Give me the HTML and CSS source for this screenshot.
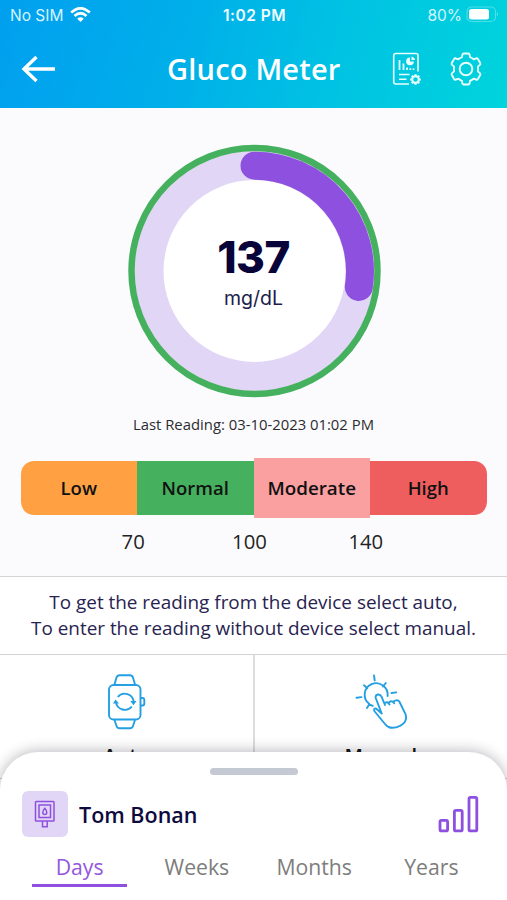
FILE: index.html
```html
<!DOCTYPE html>
<html lang="en">
<head>
<meta charset="utf-8">
<title>Gluco Meter</title>
<link rel="stylesheet" href="styles.css">
</head>
<body>
<div class="screen">
  <header class="header">
    <div class="status">
      <div class="carrier"><span>No SIM</span>
        <svg width="21" height="16" viewBox="0 0 21 16"><g fill="none" stroke="#fff" stroke-width="2.7"><path d="M1.2 5.6Q10.500-2.800 19.800 5.600"/><path d="M4.500 9Q10.500 3.500 16.500 9"/></g><path d="M7.200 11.700Q10.500 9 13.800 11.700L10.500 15Z" fill="#fff"/></svg>
      </div>
      <div class="time">1:02 PM</div>
      <div class="battery"><span>80%</span>
        <svg width="33" height="17" viewBox="0 0 33 17"><rect x="1" y="1" width="28.500" height="14.500" rx="4.500" fill="none" stroke="#fff" stroke-opacity=".3" stroke-width="1.200"/><rect x="3" y="3" width="20" height="10.500" rx="2.500" fill="#fff"/><path d="M31 6Q33 8.200 31 10.500Z" fill="#fff" opacity=".4"/></svg>
      </div>
    </div>
    <div class="appbar">
      <svg class="back" width="34" height="28" viewBox="0 0 34 28"><path d="M34 14H3M15.500 2L3 14L15.500 26" fill="none" stroke="#fff" stroke-width="3.400"/></svg>
      <h1>Gluco Meter</h1>
      <div class="actions">
        <svg width="30" height="34" viewBox="0 0 30 34" fill="none" stroke="#e8ffff" stroke-width="1.600"><path d="M17 32H4Q1.700 32 1.700 30V3.500Q1.700 1.500 4 1.500H24Q26 1.500 26 3.500V19.500"/><path d="M7.500 18V8M11.500 18V11.500M15 18V15.500M18.300 18V16.300M21.500 18V16.500" stroke-width="1.800"/><path d="M7 22.500H17.500M7 27.200H14.500"/><path d="M18 5.500A3.900 3.900 0 1 0 21.900 9.500H18Z" fill="#e8ffff" stroke="none"/><path d="M19.500 4.500V8H23Q22.500 5 19.500 4.500Z" fill="#e8ffff" stroke="none"/><circle cx="23.500" cy="27.500" r="3.300" stroke-width="2"/><path d="M23.500 22.200V24M23.500 31V32.800M18.200 27.500H20M27 27.500H28.800M19.800 23.800L21 25M26 30L27.200 31.200M27.200 23.800L26 25M21 30L19.800 31.200" stroke-width="2.200"/></svg>
        <svg width="34" height="34" viewBox="0 0 34 34" fill="none" stroke="#e8ffff" stroke-width="1.900" stroke-linejoin="round"><circle cx="17" cy="17" r="6.300"/><path d="M14.800 1.500H19.200Q20.400 1.500 20.600 2.700L21 5.200Q23 6 24.600 7.300L27 6.500Q28.200 6 28.900 7.100L31.200 11Q31.800 12.100 30.900 12.900L28.900 14.600Q29.300 17 28.900 19.400L30.900 21.100Q31.800 21.900 31.200 23L28.900 26.900Q28.200 28 27 27.500L24.600 26.700Q23 28 21 28.800L20.600 31.300Q20.400 32.500 19.200 32.500H14.800Q13.600 32.500 13.400 31.300L13 28.800Q11 28 9.400 26.700L7 27.500Q5.800 28 5.100 26.900L2.800 23Q2.200 21.900 3.100 21.100L5.100 19.400Q4.700 17 5.100 14.600L3.100 12.900Q2.200 12.100 2.800 11L5.100 7.100Q5.800 6 7 6.500L9.400 7.300Q11 6 13 5.200L13.400 2.700Q13.600 1.500 14.800 1.500Z"/></svg>
      </div>
    </div>
  </header>

  <main class="reading">
    <div class="gauge">
      <svg width="254" height="254" viewBox="0 0 254 254" fill="none"><circle cx="127.500" cy="127" r="92" fill="#fff"/><circle cx="127.500" cy="127" r="105.500" stroke="#e2d6f6" stroke-width="29"/><circle cx="127.500" cy="127" r="123" stroke="#45b15f" stroke-width="6.500"/><path d="M127.500 21.700A105.500 105.500 0 0 1 231.800 143" stroke="#8e50de" stroke-width="28" stroke-linecap="round"/></svg>
      <div class="value"><strong>137</strong><span>mg/dL</span></div>
    </div>
    <p class="last">Last Reading: 03-10-2023 01:02 PM</p>
    <div class="ranges">
      <div class="low">Low</div><div class="normal">Normal</div><div class="moderate">Moderate</div><div class="high">High</div>
    </div>
    <div class="limits"><span>70</span><span>100</span><span>140</span></div>
  </main>

  <p class="hint">To get the reading from the device select auto,<br>To enter the reading without device select manual.</p>

  <div class="modes">
    <div class="mode">
      <svg width="40" height="56" viewBox="0 0 40 56" fill="none" stroke="#239fe2" stroke-width="1.900"><rect x="3" y="11" width="31.500" height="34.500" rx="4.500"/><path d="M8.500 10.500L10.500 3.500Q11.300 1.200 13.500 1.200H24Q26.300 1.200 27 3.500L29 10.500M8.500 46L10.500 52Q11.300 54.300 13.500 54.300H24Q26.300 54.300 27 52L29 46M35 24H36.500Q38.300 24 38.300 26V29.500Q38.300 31.500 36.500 31.500H35"/><path d="M11.800 23A9 9 0 0 1 27.700 28M25.800 32.500A9 9 0 0 1 9.900 28"/><path d="M7 29.500L9.500 25.500L13 29.500ZM24.300 27H30.500L27.500 31.200Z" fill="#239fe2" stroke="none"/></svg>
      <span>Auto</span>
    </div>
    <div class="mode">
      <svg width="54" height="56" viewBox="0 0 54 56" fill="none" stroke="#239fe2" stroke-width="1.900" stroke-linecap="round" stroke-linejoin="round"><path d="M15.300 30A11.500 11.500 0 1 1 33.600 22M20 1.500L20.700 6.500M10 11.300L13.300 14.200M31.800 9L29 12.500M2.500 23.700L7.500 23.100M37.500 19L42.300 18.400M13 34L15.300 30.300L18.800 31.800"/><path d="M27.700 39.500L21.700 24Q21 21.300 23.700 20.500Q26.300 20 27.500 22.600L31 31M30.500 29.500Q33.200 26.500 35.500 30.500M34.500 28.800Q38 25.500 40.200 29.200M39.300 27.500Q43.500 24.800 45.300 27.500L51.500 40.200Q54 47.500 46 51.800Q39.500 55 34.500 53Q32.500 52 31 50L20.300 37Q19.500 34 22.300 34.700L27.700 39.500"/></svg>
      <span>Manual</span>
    </div>
  </div>

  <section class="sheet">
    <div class="handle"></div>
    <div class="profile">
      <div class="avatar"><svg width="22" height="28" viewBox="0 0 22 28" fill="none" stroke="#8e50de" stroke-width="1.500"><rect x="1.500" y="1.500" width="18.500" height="19.500" rx=".8"/><rect x="5" y="5" width="11.500" height="12.500"/><path d="M10.800 8.300C8 11.500 8.300 14.500 10.800 14.500S13.600 11.500 10.800 8.300ZM8.500 21V26.800H13.200V21"/></svg></div>
      <h2>Tom Bonan</h2>
      <svg class="chart" width="42" height="38" viewBox="0 0 42 38" fill="none" stroke="#8e50de" stroke-width="2.800"><rect x="2" y="25.400" width="7.600" height="10.500" rx="1.500"/><rect x="16.400" y="15.400" width="7.800" height="20.500" rx="1.500"/><rect x="31" y="2.400" width="7.800" height="33.500" rx="1.500"/></svg>
    </div>
    <nav class="tabs"><a class="active">Days</a><a>Weeks</a><a>Months</a><a>Years</a></nav>
  </section>
</div>
</body>
</html>
```
FILE: styles.css
```css
* { box-sizing: border-box; margin: 0; padding: 0; }
body { width: 507px; height: 900px; overflow: hidden; font-family: "Open Sans", sans-serif; background: #fff; }
svg { display: block; flex: none; }
.screen { position: relative; width: 507px; height: 900px; overflow: hidden; display: flex; flex-direction: column; }

.header { flex: none; height: 108px; background: linear-gradient(105deg, #019fef 0%, #00b0e9 38%, #00c2e3 65%, #00d4dc 100%); color: #fff; }
.status { height: 30px; display: grid; grid-template-columns: 1fr auto 1fr; align-items: center; padding: 0 8px 0 10px; font-family: Inter, sans-serif; font-size: 15.500px; color: #d4f4fd; }
.carrier { display: flex; align-items: center; gap: 7px; }
.time { font-weight: 600; color: #f2fdff; letter-spacing: .5px; }
.battery { display: flex; align-items: center; justify-content: flex-end; gap: 4px; }
.battery svg { margin-top: -2px; }
.appbar { height: 78px; display: flex; align-items: center; padding: 0 24px 0 21px; }
.appbar h1 { font-size: 29px; font-weight: 600; line-height: 40px; margin-left: 112px; white-space: nowrap; letter-spacing: .2px; }
.actions { display: flex; align-items: center; gap: 27px; margin-left: auto; }

.reading { flex: none; height: 468px; background: #fbfbfe; display: flex; flex-direction: column; align-items: center; padding-top: 36px; }
.gauge { display: grid; place-items: center; height: 254px; }
.gauge > * { grid-area: 1 / 1; }
.value { display: flex; flex-direction: column; align-items: center; color: #08043a; font-family: Inter, sans-serif; padding-top: 4px; }
.value strong { font-size: 44px; line-height: 50px; font-weight: 800; letter-spacing: -.6px; }
.value span { font-size: 19.500px; line-height: 32px; color: #211d4c; }
.last { font-size: 14.850px; line-height: 20px; margin-top: 16px; color: #2c2c30; white-space: nowrap; }
.ranges { display: flex; width: 466px; height: 54px; margin-top: 27px; font-size: 18.500px; font-weight: 600; color: #111; }
.ranges div { flex: 1; display: flex; align-items: center; justify-content: center; padding-bottom: 2px; }
.ranges .low { background: #ffa143; border-radius: 13px 0 0 13px; }
.ranges .normal { background: #45b15f; }
.ranges .moderate { background: #faa0a1; margin: -3px 0; padding-bottom: 0; font-size: 18.800px; }
.ranges .high { background: #ee5e5f; border-radius: 0 13px 13px 0; }
.limits { display: flex; width: 349px; margin-top: 11px; margin-right: 8px; font-size: 20.300px; line-height: 30px; color: #232323; }
.limits span { flex: 1; text-align: center; }

.hint { flex: none; height: 78px; border-top: 1px solid #d3d4d7; padding-top: 12px; text-align: center; font-size: 18.900px; line-height: 26px; color: #282351; white-space: nowrap; }
.modes { flex: none; height: 125px; display: flex; border-top: 1px solid #d3d4d7; border-bottom: 1px solid #d3d4d7; }
.mode { flex: 1; display: flex; flex-direction: column; align-items: center; padding-top: 19px; font-size: 20px; font-weight: 600; color: #111; }
.mode + .mode { border-left: 2px solid #dddddf; }
.mode span { line-height: 28px; margin-top: 12px; }

.sheet { position: absolute; left: 0; right: 0; bottom: 0; height: 148px; background: #fff; border-radius: 38px 38px 0 0; box-shadow: 0 -1px 14px rgba(20, 20, 35, .3); display: flex; flex-direction: column; }
.handle { width: 88px; height: 7px; border-radius: 4px; background: #c4c9d3; margin: 16px auto 0; }
.profile { display: flex; align-items: center; height: 46px; margin: 16px 27px 0 22px; }
.avatar { width: 46px; height: 46px; border-radius: 6px; background: #e2d6f6; display: grid; place-items: center; }
.profile h2 { margin-left: 11px; font-size: 21.500px; font-weight: 600; color: #0d0a3e; white-space: nowrap; }
.chart { margin-left: auto; }
.tabs { display: flex; margin: 13px 17px 0 21px; font-size: 21.200px; line-height: 34px; color: #7d7d7d; }
.tabs a { flex: 1; display: flex; flex-direction: column; align-items: center; }
.tabs .active { color: #9656dd; }
.tabs .active::after { content: ""; width: 95px; height: 3px; background: #8e50de; }
```
